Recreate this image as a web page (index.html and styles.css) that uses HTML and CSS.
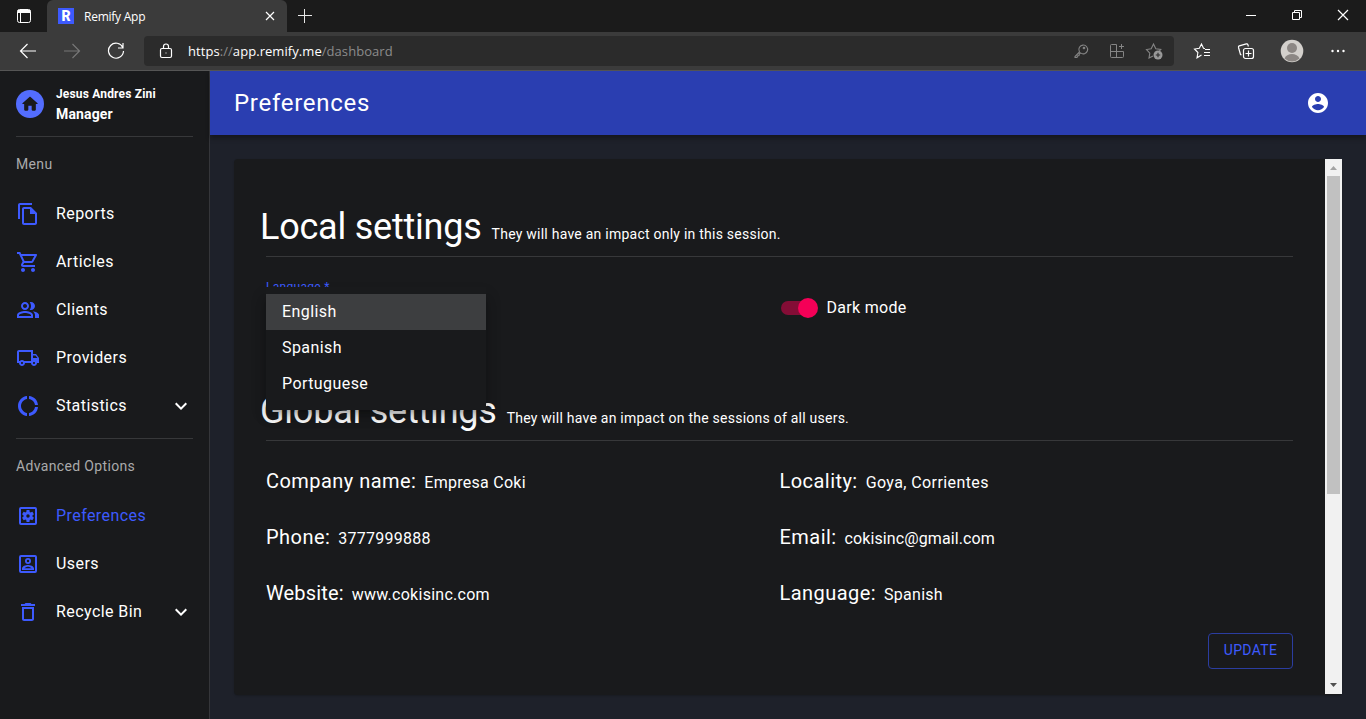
FILE: index.html
```html
<!DOCTYPE html>
<html lang="en">
<head>
<meta charset="utf-8">
<title>Remify App</title>
<link rel="stylesheet" href="styles.css">
</head>
<body>
<div class="window">
  <div class="tabstrip">
    <div class="tab-actions"><svg width="16" height="16" viewBox="0 0 16 16" fill="none" stroke="#fff"><rect x="1.5" y="1.5" width="13" height="13" rx="2"/><path d="M2 2.500h12v2H2z" fill="#fff"/><path d="M4.500 4v10"/></svg></div>
    <div class="tab">
      <span class="favicon">R</span>
      <span class="tab-title">Remify App</span>
      <svg class="tab-close" width="10" height="10" viewBox="0 0 10 10" stroke="#fff" stroke-width="1.200"><path d="M1 1l8 8M9 1l-8 8"/></svg>
    </div>
    <svg class="new-tab" width="16" height="16" viewBox="0 0 16 16" stroke="#e8e8e8"><path d="M1 7.500h14M7.500 1v14"/></svg>
    <div class="window-controls">
      <svg width="12" height="12" viewBox="0 0 12 12" stroke="#fff"><path d="M1 6.500h10"/></svg>
      <svg width="12" height="12" viewBox="0 0 12 12" fill="none" stroke="#fff"><path d="M1.500 3.500h7v7h-7zM3.500 3.500v-2h7v7h-2"/></svg>
      <svg width="12" height="12" viewBox="0 0 12 12" stroke="#fff" stroke-width="1.200"><path d="M1 1l10 10M11 1L1 11"/></svg>
    </div>
  </div>
  <div class="toolbar">
    <svg class="nav" width="18" height="16" viewBox="0 0 18 16" fill="none" stroke="#fff" stroke-width="1.200"><path d="M17 8H2M8.500 1L1.500 8l7 7"/></svg>
    <svg class="nav" width="18" height="16" viewBox="0 0 18 16" fill="none" stroke="#777" stroke-width="1.200"><path d="M1 8h15M9.500 1l7 7-7 7"/></svg>
    <svg class="nav" width="18" height="18" viewBox="0 0 18 18" fill="none" stroke="#fff" stroke-width="1.200"><path d="M15.800 5.500A7.500 7.500 0 1 0 16.500 9M16 1v5h-5"/></svg>
    <div class="address">
      <svg class="lock" width="14" height="16" viewBox="0 0 14 16" fill="none" stroke="#fff" stroke-width="1.200"><rect x="1.500" y="5.500" width="11" height="9" rx="1.500"/><path d="M4.500 5V3.500a2.500 2.500 0 0 1 5 0V5"/><rect x="6.500" y="9.500" width="1" height="1" fill="#fff" stroke="none"/></svg>
      <div class="url">https<i>://</i>app.remify.me<i>/dashboard</i></div>
      <div class="address-icons">
        <svg width="16" height="16" viewBox="0 0 16 16" fill="none" stroke="#858585" stroke-width="1.100"><path d="M7 9.300L2.500 13.800v1h2l.5-1.500 1.500-.4.300-1.500L8 10.200a4.400 4.400 0 1 0-1.200-1.500z" transform="translate(-.5 -.3)"/><circle cx="11" cy="5" r=".8"/></svg>
        <svg width="16" height="16" viewBox="0 0 16 16" fill="none" stroke="#858585"><path d="M7.500 1.500h-5a1 1 0 0 0-1 1v11a1 1 0 0 0 1 1h11a1 1 0 0 0 1-1v-5h-13M7.500 1.500v13M12.500 1v5M10 3.500h5"/></svg>
        <svg width="18" height="18" viewBox="0 0 18 18" fill="none" stroke="#858585" stroke-width="1.100"><path d="M8 14l-4 2.100.8-5L1.500 7.500l4.700-.8L8.500 2l2.300 4.700 5 .8-1.500 1.600"/><circle cx="13" cy="13" r="4.500" fill="#999" stroke="none"/><path d="M13 10.800v4.400M10.800 13h4.400" stroke="#2b2b2b"/></svg>
      </div>
    </div>
    <div class="tools">
      <svg width="18" height="18" viewBox="0 0 18 18" fill="none" stroke="#fff" stroke-width="1.100"><path d="M8.500 13l-4.500 2.800.9-5.300L1.500 7l4.800-.8L8.500 2l2 4.200 1.500.3M12 7.500h5M11 10.500h6M11 13.500h6"/></svg>
      <svg width="18" height="18" viewBox="0 0 18 18" fill="none" stroke="#fff" stroke-width="1.200"><rect x="6.500" y="6.500" width="10" height="10" rx="2"/><path d="M11.500 8.500v6M8.500 11.500h6M4.500 13l-1-.5-2-7q-.3-1.200.8-1.600l7-2q1.200-.3 1.600.8l.5 1.800"/></svg>
      <svg width="24" height="24" viewBox="0 0 24 24"><circle cx="12" cy="12" r="11.300" fill="#d3d0cc"/><circle cx="12" cy="9" r="5" fill="#8c8784"/><path d="M4.500 19.500c2-6 13-6 15 0a11 11 0 0 1-15 0z" fill="#8c8784"/></svg>
      <svg width="16" height="16" viewBox="0 0 16 16" fill="#fff"><circle cx="2.500" cy="8" r="1.200"/><circle cx="8" cy="8" r="1.200"/><circle cx="13.500" cy="8" r="1.200"/></svg>
    </div>
  </div>
  <div class="app">
    <aside class="sidebar">
      <div class="profile">
        <span class="home"><svg width="20" height="20" viewBox="0 0 24 24" fill="#191a1c"><path d="M10 19v-5h4v5c0 .55.45 1 1 1h3c.55 0 1-.45 1-1v-7h1.700c.46 0 .68-.57.33-.87L12.670 3.600c-.38-.34-.96-.34-1.340 0l-8.360 7.530c-.34.3-.13.87.33.87H5v7c0 .55.45 1 1 1h3c.55 0 1-.45 1-1z"/></svg></span>
        <div><div class="user-name">Jesus Andres Zini</div><div class="user-role">Manager</div></div>
      </div>
      <nav class="group">
        <div class="group-title">Menu</div>
        <div class="item"><svg class="icon" viewBox="0 0 24 24"><path d="M16 1H4c-1.100 0-2 .9-2 2v14h2V3h12V1zm-1 4H8c-1.100 0-1.990.9-1.990 2L6 21c0 1.100.89 2 1.990 2H19c1.100 0 2-.9 2-2V11l-6-6zM8 21V7h6v5h5v9H8z"/></svg><span>Reports</span></div>
        <div class="item"><svg class="icon" viewBox="0 0 24 24"><path d="M15.550 13c.75 0 1.410-.41 1.750-1.030l3.580-6.490c.37-.66-.11-1.480-.87-1.480H5.210l-.94-2H1v2h2l3.600 7.590-1.350 2.440C4.520 15.370 5.480 17 7 17h12v-2H7l1.100-2h7.450zM6.160 6h12.150l-2.760 5H8.530L6.160 6zM7 18c-1.100 0-1.990.9-1.990 2S5.900 22 7 22s2-.9 2-2-.9-2-2-2zm10 0c-1.100 0-1.990.9-1.990 2s.89 2 1.990 2 2-.9 2-2-.9-2-2-2z"/></svg><span>Articles</span></div>
        <div class="item"><svg class="icon" viewBox="0 0 24 24"><path d="M16.670 13.130C18.040 14.060 19 15.320 19 17v3h4v-3c0-2.180-3.570-3.470-6.330-3.870zM15 12c2.210 0 4-1.790 4-4s-1.790-4-4-4c-.47 0-.91.1-1.330.24C14.500 5.270 15 6.580 15 8s-.5 2.730-1.330 3.760c.42.14.86.24 1.330.24zM9 12c2.210 0 4-1.790 4-4s-1.790-4-4-4-4 1.790-4 4 1.790 4 4 4zm0-6c1.100 0 2 .9 2 2s-.9 2-2 2-2-.9-2-2 .9-2 2-2zM9 13c-2.670 0-8 1.340-8 4v3h16v-3c0-2.660-5.330-4-8-4zm6 5H3v-.99C3.200 16.290 6.300 15 9 15s5.800 1.290 6 2v1z"/></svg><span>Clients</span></div>
        <div class="item"><svg class="icon" viewBox="0 0 24 24"><path d="M20 8h-3V4H3c-1.100 0-2 .9-2 2v11h2c0 1.660 1.340 3 3 3s3-1.340 3-3h6c0 1.660 1.340 3 3 3s3-1.340 3-3h2v-5l-3-4zm-.5 1.500l1.960 2.500H17V9.500h2.500zM6 18c-.55 0-1-.45-1-1s.45-1 1-1 1 .45 1 1-.45 1-1 1zm2.220-3c-.55-.61-1.330-1-2.220-1s-1.670.39-2.220 1H3V6h12v9H8.220zM18 18c-.55 0-1-.45-1-1s.45-1 1-1 1 .45 1 1-.45 1-1 1z"/></svg><span>Providers</span></div>
        <div class="item"><svg class="icon" viewBox="0 0 24 24"><path d="M11 5.080V2c-5 .5-9 4.810-9 10s4 9.500 9 10v-3.080c-3-.48-6-3.400-6-6.920s3-6.440 6-6.920zM18.970 11H22c-.47-5-4-8.530-9-9v3.080C16 5.510 18.540 8 18.970 11zM13 18.920V22c5-.47 8.530-4 9-9h-3.030c-.43 3-2.970 5.490-5.970 5.920z"/></svg><span>Statistics</span><svg class="chevron" viewBox="0 0 24 24"><path d="M16.590 8.590L12 13.170 7.410 8.590 6 10l6 6 6-6z"/></svg></div>
      </nav>
      <nav class="group">
        <div class="group-title advanced">Advanced Options</div>
        <div class="item active"><svg class="icon" viewBox="0 0 24 24"><path fill-rule="evenodd" d="M5 3h14q2 0 2 2v14q0 2-2 2H5q-2 0-2-2V5q0-2 2-2zm0 2v14h14V5z"/><path transform="translate(4.560 4.560) scale(.62)" d="M19.140 12.940c.04-.3.06-.61.06-.94 0-.32-.02-.64-.07-.94l2.030-1.580c.18-.14.23-.41.12-.61l-1.920-3.320c-.12-.22-.37-.29-.59-.22l-2.390.96c-.5-.38-1.030-.7-1.620-.94l-.36-2.540c-.04-.24-.24-.41-.48-.41h-3.840c-.24 0-.43.17-.47.41l-.36 2.540c-.59.24-1.130.57-1.620.94l-2.390-.96c-.22-.08-.47 0-.59.22L2.740 8.870c-.12.21-.08.47.12.61l2.030 1.580c-.05.3-.09.63-.09.94s.02.64.07.94l-2.030 1.580c-.18.14-.23.41-.12.61l1.920 3.320c.12.22.37.29.59.22l2.390-.96c.5.38 1.030.7 1.620.94l.36 2.540c.05.24.24.41.48.41h3.840c.24 0 .44-.17.47-.41l.36-2.540c.59-.24 1.130-.56 1.620-.94l2.390.96c.22.08.47 0 .59-.22l1.920-3.320c.12-.22.07-.47-.12-.61l-2.010-1.580zM12 14.800a2.800 2.800 0 1 1 0-5.600 2.800 2.800 0 0 1 0 5.600z"/></svg><span>Preferences</span></div>
        <div class="item"><svg class="icon" viewBox="0 0 24 24"><path fill-rule="evenodd" d="M5 3h14q2 0 2 2v14q0 2-2 2H5q-2 0-2-2V5q0-2 2-2zm0 2v14h14V5zM12 6a3 3 0 1 1 0 6 3 3 0 0 1 0-6zm0 1.800a1.200 1.200 0 1 0 0 2.400 1.200 1.200 0 0 0 0-2.400zM6 18v-1.500C6 14 10 13 12 13s6 1 6 3.500V18zm2.400-1.700h7.200c-.8-.9-2.400-1.500-3.600-1.500s-2.800.6-3.600 1.500z"/></svg><span>Users</span></div>
        <div class="item"><svg class="icon" viewBox="0 0 24 24"><path d="M6 19c0 1.100.9 2 2 2h8c1.100 0 2-.9 2-2V7H6v12zM8 9h8v10H8V9zm7.500-5l-1-1h-5l-1 1H5v2h14V4z"/></svg><span>Recycle Bin</span><svg class="chevron" viewBox="0 0 24 24"><path d="M16.590 8.590L12 13.170 7.410 8.590 6 10l6 6 6-6z"/></svg></div>
      </nav>
    </aside>
    <main class="main">
      <header class="appbar"><h1>Preferences</h1><svg width="24" height="24" viewBox="0 0 24 24" fill="#fff"><path d="M12 2C6.480 2 2 6.480 2 12s4.480 10 10 10 10-4.480 10-10S17.520 2 12 2zm0 3c1.660 0 3 1.340 3 3s-1.340 3-3 3-3-1.340-3-3 1.340-3 3-3zm0 14.200c-2.500 0-4.710-1.280-6-3.220.03-1.990 4-3.080 6-3.080 1.990 0 5.970 1.090 6 3.080-1.290 1.940-3.500 3.220-6 3.220z"/></svg></header>
      <div class="card">
        <div class="content">
          <div class="heading"><h2>Local settings</h2><small>They will have an impact only in this session.</small></div>
          <div class="local-row">
            <div class="select">
              <label>Language *</label>
              <div class="menu"><div class="option selected">English</div><div class="option">Spanish</div><div class="option">Portuguese</div></div>
            </div>
            <div class="switch"><span class="track"></span><span class="switch-label">Dark mode</span></div>
          </div>
          <div class="heading"><h2>Global settings</h2><small>They will have an impact on the sessions of all users.</small></div>
          <div class="fields">
            <div class="field"><b>Company name:</b><span>Empresa Coki</span></div>
            <div class="field"><b>Locality:</b><span class="locality">Goya, Corrientes</span></div>
            <div class="field"><b>Phone:</b><span>3777999888</span></div>
            <div class="field"><b>Email:</b><span class="email">cokisinc@gmail.com</span></div>
            <div class="field"><b class="website">Website:</b><span>www.cokisinc.com</span></div>
            <div class="field"><b>Language:</b><span>Spanish</span></div>
          </div>
          <div class="actions"><button class="update">UPDATE</button></div>
        </div>
        <div class="scrollbar">
          <svg width="17" height="17" viewBox="0 0 17 17"><path d="M5 11l3.500-4L12 11z" fill="#a3a3a3"/></svg>
          <div class="thumb"></div>
          <svg width="17" height="17" viewBox="0 0 17 17"><path d="M5 6l3.500 4L12 6z" fill="#505050"/></svg>
        </div>
      </div>
    </main>
  </div>
</div>
</body>
</html>
```
FILE: styles.css
```css
* { box-sizing: border-box; }
body { margin: 0; background: #1e212a; color: #fff; font-family: Roboto, "Liberation Sans", sans-serif; overflow: hidden; }
svg { display: block; flex: none; }
.window { width: 1366px; height: 719px; display: flex; flex-direction: column; white-space: nowrap; }

/* Browser frame */
.tabstrip { height: 32px; background: #1b1b1b; display: flex; align-items: center; font-family: "Open Sans", sans-serif; }
.tab-actions { width: 47px; padding-left: 16px; }
.tab { width: 240px; height: 32px; background: #3b3b3b; border-radius: 6px 6px 0 0; display: flex; align-items: center; padding: 0 12px 0 11px; }
.favicon { width: 16px; height: 16px; background: #3d5afe; font: 900 14px/16px Roboto, sans-serif; text-align: center; }
.tab-title { font-size: 12px; margin-left: 10px; flex: 1; letter-spacing: -0.25px; }
.new-tab { margin-left: 10px; }
.window-controls { margin-left: auto; display: flex; gap: 34px; padding: 0 17px 3px 0; }
.toolbar { height: 39px; background: #3b3b3b; border-bottom: 1px solid #555; display: flex; align-items: center; padding-left: 19px; font-family: "Open Sans", sans-serif; }
.nav { margin-right: 26px; }
.address { width: 1030px; height: 30px; margin-left: -7px; background: #2b2b2b; border-radius: 4px; display: flex; align-items: center; padding: 0 11px 0 15px; }
.url { margin-left: 15px; font-size: 13px; flex: 1; letter-spacing: 0.06px; }
.url i { font-style: normal; color: #8c8c8c; }
.address-icons { display: flex; align-items: center; gap: 20px; }
.tools { display: flex; align-items: center; gap: 25.500px; margin-left: 19px; }

/* Sidebar */
.app { flex: 1; min-height: 0; display: flex; }
.sidebar { width: 210px; background: #191a1c; border-right: 1px solid #35363a; padding: 0 16px; }
.profile { height: 66px; display: flex; align-items: center; border-bottom: 1px solid #37383a; font-weight: 700; }
.home { width: 28px; height: 28px; border-radius: 50%; background: #536dfe; display: flex; align-items: center; justify-content: center; margin-right: 12px; }
.user-name { font-size: 12px; line-height: 20px; letter-spacing: 0.17px; }
.user-role { font-size: 14px; line-height: 20px; letter-spacing: 0.15px; }
.group { height: 302px; border-bottom: 1px solid #37383a; }
.group + .group { border: 0; }
.group-title { height: 53px; line-height: 54px; font-size: 14px; color: #aaaaab; letter-spacing: 0.35px; }
.item { height: 48px; display: flex; align-items: center; font-size: 16px; letter-spacing: 0.43px; }
.item span { padding-bottom: 2px; }
.icon { width: 24px; height: 24px; fill: #3d5afe; margin-right: 16px; }
.chevron { width: 24px; height: 24px; fill: #fff; margin-left: auto; }
.active { color: #3d5afe; }

/* Main panel */
.main { flex: 1; display: flex; flex-direction: column; }
.appbar { height: 64px; background: #2a3eb1; display: flex; align-items: center; justify-content: space-between; padding: 0 36px 0 24px; box-shadow: 0 2px 4px -1px #0003, 0 4px 5px #0003; }
.appbar h1 { margin: 0; font-size: 24px; font-weight: 400; letter-spacing: 0.73px; }
.card { width: 1108px; height: 536px; margin: 24px; display: flex; background: #191a1c; border-radius: 4px; box-shadow: 0 1px 2px #0003; }
.content { flex: 1; padding: 44px 32px 0; }
.heading { height: 54px; border-bottom: 1px solid #37383a; display: flex; align-items: baseline; }
.heading h2 { margin: 0 0 0 -6px; font-size: 36px; line-height: 49px; font-weight: 400; letter-spacing: -0.22px; }
.heading small { font-size: 14px; margin-left: 10px; letter-spacing: 0.24px; }
.local-row { height: 130px; display: grid; grid-template-columns: 1fr 1fr; position: relative; }
.select label { display: block; color: #3d5afe; font-size: 12px; line-height: 16px; padding-top: 22px; letter-spacing: 0.3px; }
.menu { position: absolute; top: 37px; left: 0; width: 220px; height: 116px; background: #191a1c; font-size: 16px; box-shadow: 0 5px 5px -3px #0003, 0 8px 10px 1px #00000024, 0 3px 14px 2px #0000001f; }
.select::after { content: ""; position: absolute; left: 0; top: 30px; width: 220px; height: 7px; background: #191a1c; }
.option { height: 36px; line-height: 36px; padding-left: 16px; letter-spacing: 0.42px; }
.selected { background: #3d3e40; }
.switch { height: 28px; display: flex; align-items: center; margin-top: 37px; padding-left: 1px; }
.switch-label { padding-bottom: 2px; letter-spacing: 0.3px; }
.track { width: 34px; height: 14px; border-radius: 7px; background: #840d36; position: relative; margin-right: 12px; }
.track::after { content: ""; position: absolute; width: 20px; height: 20px; border-radius: 50%; background: #f50057; left: 17px; top: -3px; }
.fields { display: grid; grid-template-columns: 1fr 1fr; padding-top: 12px; }
.field { height: 56px; line-height: 56px; display: flex; align-items: baseline; }
.field b { font-size: 20px; font-weight: 400; margin-right: 8px; letter-spacing: 0.45px; }
.field .website { letter-spacing: 0.15px; }
.field span { font-size: 16px; letter-spacing: 0.27px; }
.field .locality { letter-spacing: 0.4px; }
.field .email { letter-spacing: 0.1px; }
.actions { display: flex; justify-content: flex-end; padding-top: 12px; }
.update { width: 85px; height: 36px; padding: 0 0 2px; background: none; border: 1px solid #2b3da0; border-radius: 4px; color: #3d5afe; font: 14px Roboto, sans-serif; letter-spacing: 0.3px; }
.scrollbar { width: 17px; height: 535px; background: #f1f1f1; display: flex; flex-direction: column; }
.thumb { height: 318px; margin: 0 2px auto; background: #c1c1c1; }
```
